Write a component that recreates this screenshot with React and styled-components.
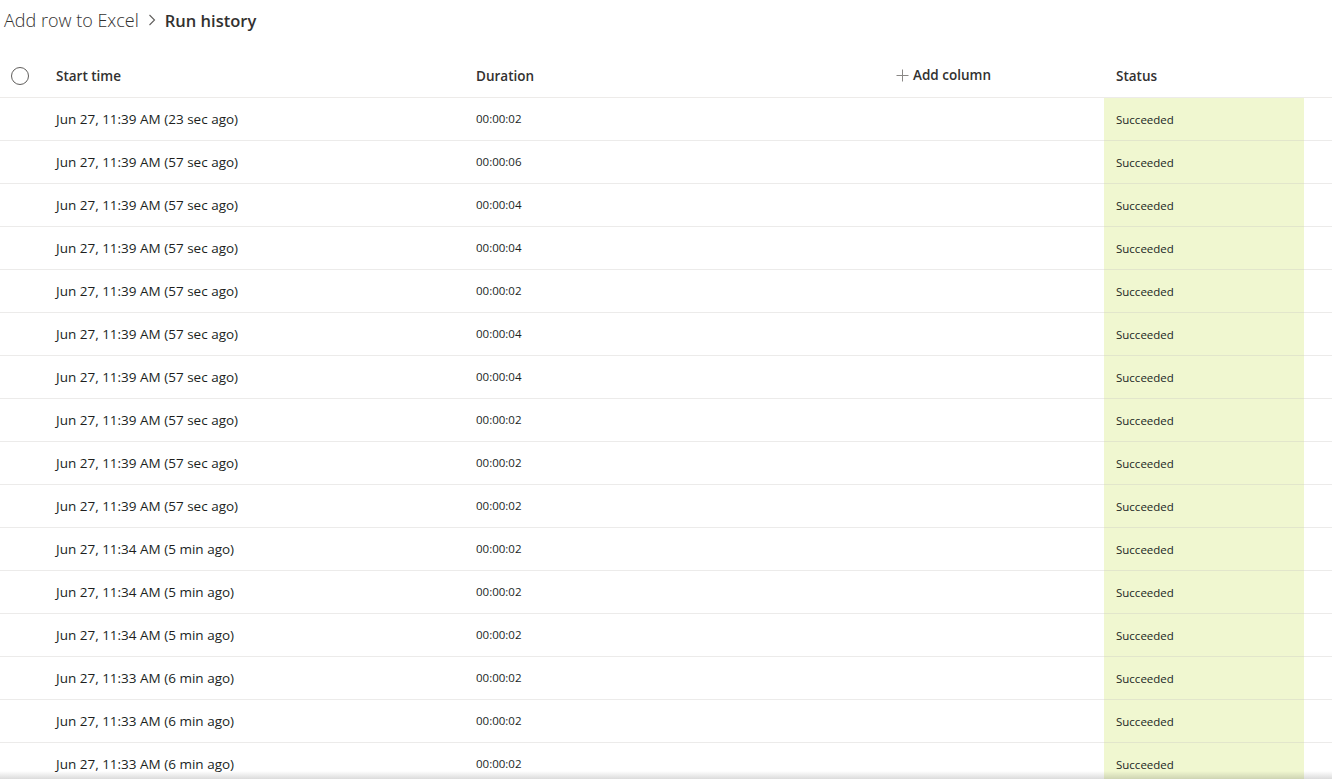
import React from 'react'
import styled, { createGlobalStyle } from 'styled-components'

const GlobalStyle = createGlobalStyle`
  html, body {
    margin: 0;
    padding: 0;
    background: #fff;
    overflow: hidden;
    font-family: "Segoe UI", "Open Sans", "Noto Sans", sans-serif;
    color: #323130;
  }
`

const runs = [
  ['Jun 27, 11:39 AM (23 sec ago)', '00:00:02'],
  ['Jun 27, 11:39 AM (57 sec ago)', '00:00:06'],
  ['Jun 27, 11:39 AM (57 sec ago)', '00:00:04'],
  ['Jun 27, 11:39 AM (57 sec ago)', '00:00:04'],
  ['Jun 27, 11:39 AM (57 sec ago)', '00:00:02'],
  ['Jun 27, 11:39 AM (57 sec ago)', '00:00:04'],
  ['Jun 27, 11:39 AM (57 sec ago)', '00:00:04'],
  ['Jun 27, 11:39 AM (57 sec ago)', '00:00:02'],
  ['Jun 27, 11:39 AM (57 sec ago)', '00:00:02'],
  ['Jun 27, 11:39 AM (57 sec ago)', '00:00:02'],
  ['Jun 27, 11:34 AM (5 min ago)', '00:00:02'],
  ['Jun 27, 11:34 AM (5 min ago)', '00:00:02'],
  ['Jun 27, 11:34 AM (5 min ago)', '00:00:02'],
  ['Jun 27, 11:33 AM (6 min ago)', '00:00:02'],
  ['Jun 27, 11:33 AM (6 min ago)', '00:00:02'],
  ['Jun 27, 11:33 AM (6 min ago)', '00:00:02'],
  ['Jun 27, 11:33 AM (6 min ago)', '00:00:02'],
]

export default function App() {
  return (
    <Page>
      <GlobalStyle />
      <Breadcrumb>
        <Crumb>Add row to Excel</Crumb>
        <Chevron width="10" height="14" viewBox="0 0 10 14">
          <path d="M2.5 2 L7.5 7 L2.5 12" fill="none" stroke="#605e5c" strokeWidth="1.1" />
        </Chevron>
        <Current>Run history</Current>
      </Breadcrumb>

      <Grid>
        <HeaderRow>
          <CheckCell>
            <Radio />
          </CheckCell>
          <HeadCell>Start time</HeadCell>
          <HeadCell>Duration</HeadCell>
          <HeadCell>
            <AddColumn>
              <svg width="13" height="13" viewBox="0 0 13 13">
                <path d="M6.5 0.5 V12.5 M0.5 6.5 H12.5" stroke="#8a8886" strokeWidth="1" />
              </svg>
              Add column
            </AddColumn>
          </HeadCell>
          <HeadCell $pad={12}>Status</HeadCell>
          <div />
        </HeaderRow>
        {runs.map(([start, duration], i) => (
          <Row key={i}>
            <CheckCell />
            <StartCell>{start}</StartCell>
            <SmallCell>{duration}</SmallCell>
            <div />
            <StatusCell>Succeeded</StatusCell>
            <div />
          </Row>
        ))}
      </Grid>
      <BottomShade />
    </Page>
  )
}

const Page = styled.div`
  height: 779px;
  overflow: hidden;
  position: relative;
`

const Breadcrumb = styled.div`
  display: flex;
  align-items: center;
  height: 40px;
  padding-left: 4px;
  gap: 7px;
  margin-bottom: 15px;
`

const Crumb = styled.span`
  font-size: 18px;
  font-weight: 300;
  color: #323130;
`

const Chevron = styled.svg`
  margin: 0 1px;
`

const Current = styled.span`
  font-size: 16.5px;
  font-weight: 600;
  color: #323130;
`

const Grid = styled.div`
  display: flex;
  flex-direction: column;
`

const columns = '40px 420px 420px 224px 200px 1fr'

const HeaderRow = styled.div`
  display: grid;
  grid-template-columns: ${columns};
  height: 42px;
  border-bottom: 1px solid #edebe9;
  align-items: center;
`

const Row = styled.div`
  display: grid;
  grid-template-columns: ${columns};
  height: 43px;
  box-sizing: border-box;
  position: relative;

  &::after {
    content: '';
    position: absolute;
    left: 0;
    right: 0;
    bottom: 0;
    height: 1px;
    background: rgba(200, 198, 196, 0.35);
  }
`

const CheckCell = styled.div`
  display: flex;
  align-items: center;
  justify-content: center;
`

const Radio = styled.span`
  width: 16px;
  height: 16px;
  border: 1px solid #605e5c;
  border-radius: 50%;
`

const HeadCell = styled.div`
  padding-left: ${p => p.$pad ?? 16}px;
  font-size: 13.5px;
  font-weight: 600;
  color: #323130;
`

const AddColumn = styled.span`
  display: inline-flex;
  align-items: center;
  gap: 4px;
`

const StartCell = styled.div`
  display: flex;
  align-items: center;
  padding-left: 16px;
  padding-bottom: 1px;
  font-size: 13.5px;
  color: #201f1e;
`

const SmallCell = styled.div`
  display: flex;
  align-items: center;
  padding-left: 16px;
  padding-bottom: 3px;
  font-size: 11.5px;
  color: #201f1e;
`

const StatusCell = styled.div`
  display: flex;
  align-items: center;
  padding-left: 12px;
  font-size: 11.5px;
  color: #201f1e;
  background: #f0f7d0;
`

const BottomShade = styled.div`
  position: absolute;
  left: 0;
  right: 0;
  bottom: 0;
  height: 8px;
  background: linear-gradient(to bottom, rgba(0,0,0,0), rgba(0,0,0,0.14));
`
